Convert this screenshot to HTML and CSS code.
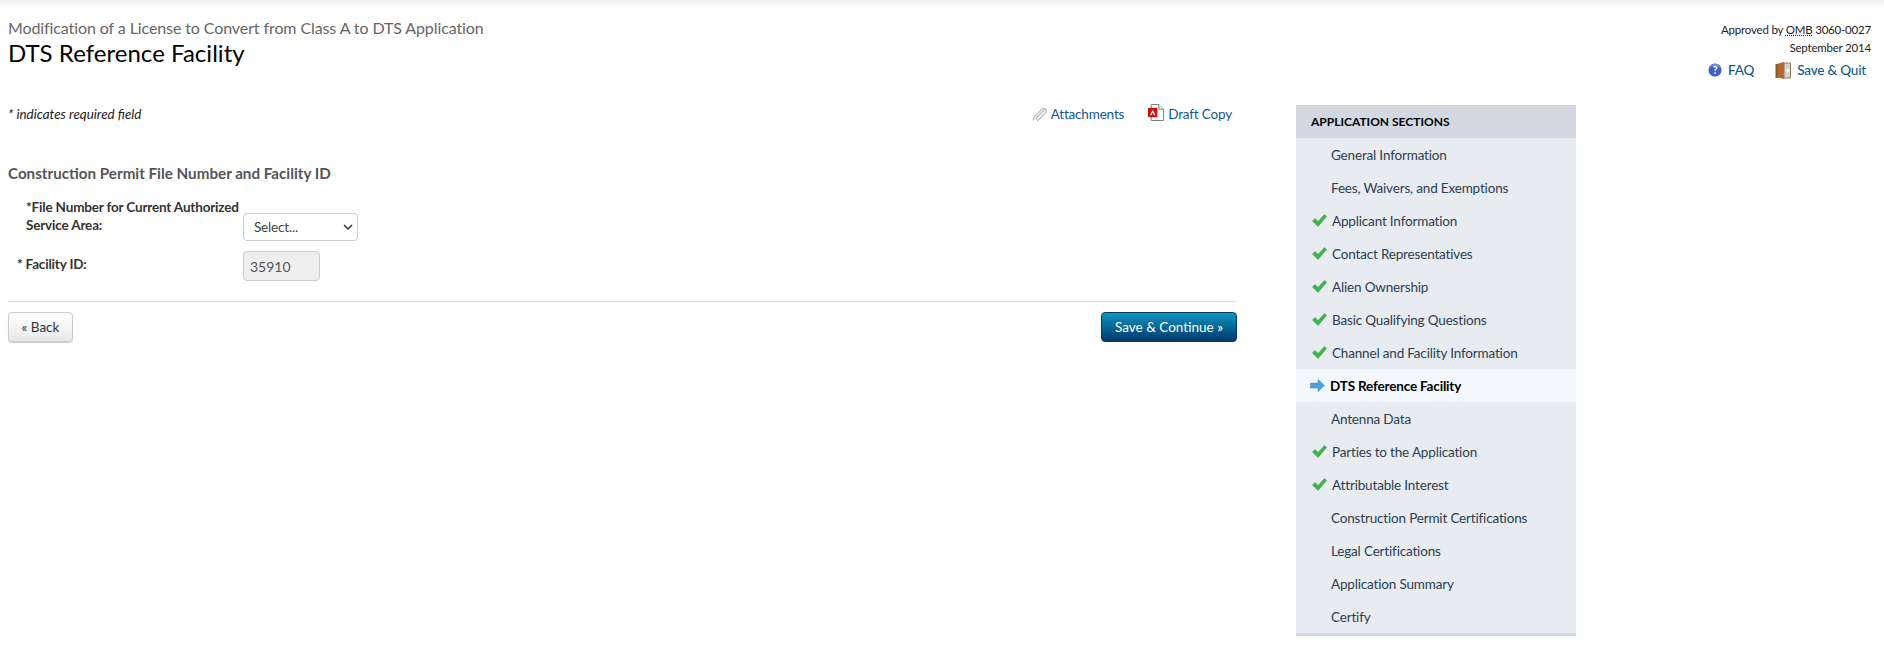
FILE: index.html
```html
<!DOCTYPE html>
<html lang="en">
<head>
  <meta charset="UTF-8" />
  <title>DTS Reference Facility</title>
  <link rel="stylesheet" href="styles.css">
</head>
<body>
  <div class="top-shade"></div>
  <header class="page-head">
    <div>
      <div class="app-name">Modification of a License to Convert from Class A to DTS Application</div>
      <h1>DTS Reference Facility</h1>
    </div>
    <div class="head-right">
      <div class="omb">Approved by <abbr title="Office of Management and Budget">OMB</abbr> 3060-0027</div>
      <div class="omb">September 2014</div>
      <div class="head-links">
        <a href="#" class="link">
          <svg class="icon" width="14" height="14" viewBox="0 0 16 16"><circle cx="8" cy="8" r="7.5" fill="#3f5fc4"/><path d="M1.5 7a6.5 6 0 0 1 13 0a6.5 3.5 0 0 0-13 0z" fill="#7f97e0"/><text x="8" y="12.500" text-anchor="middle" class="q-mark">?</text></svg>
          FAQ
        </a>
        <a href="#" class="link">
          <svg class="icon" width="16" height="17" viewBox="0 0 16 17"><rect x="0.5" y="2" width="3" height="14" fill="#8a5a2b"/><path d="M3 1.5L9 0v17l-6-1.5z" fill="#b5672a"/><path d="M9 1h6.5v15H9z" fill="#cfd3d6" stroke="#9b7a52"/><path d="M10 8h2V6l3 2.5-3 2.5V9h-2z" fill="#fff"/></svg>
          Save &amp; Quit
        </a>
      </div>
    </div>
  </header>

  <div class="layout">
    <main class="main">
      <div class="tools">
        <em class="req-note">* indicates required field</em>
        <div class="tool-links">
          <a href="#" class="link link-attach">
            <svg class="icon" width="15" height="16" viewBox="0 0 16 16" fill="none" stroke="#b4b4b4" stroke-width="1.2"><path d="M13.5 3.2L5 11.8c-.9.9-.6 1.9 0 2.4.7.6 1.6.5 2.3-.2l7-7.2c1.3-1.4 1.2-3 .1-4S11.6 1.900 10.400 3.100L2.900 10.700c-1.700 1.800-1.400 3.300-.9 4.200"/></svg>
            Attachments
          </a>
          <a href="#" class="link link-attach">
            <svg class="icon icon-pdf" width="16" height="17" viewBox="0 0 17 18"><path d="M3.500 .5h8l5 5v12h-13z" fill="#fff" stroke="#777"/><path d="M11.500 .5v5h5" fill="#eee" stroke="#777"/><rect x="0" y="4" width="10" height="10" fill="#cc0f0f"/><path d="M5 6l3 6H6.500L5 9l-1.500 3H2z" fill="#fff"/></svg>
            Draft Copy
          </a>
        </div>
      </div>

      <h2>Construction Permit File Number and Facility ID</h2>

      <div class="field field-file">
        <label class="field-label">*File Number for Current Authorized Service Area:</label>
        <div class="select-box">
          <span>Select...</span>
          <svg width="10" height="6" viewBox="0 0 10 6" fill="none" stroke="#333" stroke-width="1.500"><path d="M1 1l4 4 4-4"/></svg>
        </div>
      </div>
      <div class="field field-id">
        <label class="field-label"><span class="star">*</span>Facility ID:</label>
        <input class="readonly" type="text" value="35910" readonly />
      </div>

      <div class="actions">
        <button class="btn-back">« Back</button>
        <button class="btn-next">Save &amp; Continue »</button>
      </div>
    </main>

    <aside class="sections">
      <div class="sections-head">APPLICATION SECTIONS</div>
      <ul>
        <li>General Information</li>
        <li>Fees, Waivers, and Exemptions</li>
        <li class="done">Applicant Information</li>
        <li class="done">Contact Representatives</li>
        <li class="done">Alien Ownership</li>
        <li class="done">Basic Qualifying Questions</li>
        <li class="done">Channel and Facility Information</li>
        <li class="current">DTS Reference Facility</li>
        <li>Antenna Data</li>
        <li class="done">Parties to the Application</li>
        <li class="done">Attributable Interest</li>
        <li>Construction Permit Certifications</li>
        <li>Legal Certifications</li>
        <li>Application Summary</li>
        <li>Certify</li>
      </ul>
    </aside>
  </div>

  <script>
    // status icons for the section list
    const check = '<svg class="mark" width="15" height="13" viewBox="0 0 15 13"><path d="M0.500 7L3 4.500l3 3L12.500 0.500 14.500 2.500 6 12.500z" fill="#3db54a" stroke="#2c9a3c" stroke-width=".5"/></svg>';
    const arrow = '<svg class="mark" width="15" height="13" viewBox="0 0 15 13"><path d="M0.500 4h7.500V.5l6.500 6-6.500 6V9H.5z" fill="#4a9fdf" stroke="#3a86c4" stroke-width=".5"/></svg>';
    document.querySelectorAll('.sections li').forEach(function (li) {
      if (li.classList.contains('done')) li.insertAdjacentHTML('afterbegin', check);
      if (li.classList.contains('current')) li.insertAdjacentHTML('afterbegin', arrow);
    });
  </script>
</body>
</html>
```

FILE: styles.css
```css
html, body {
  margin: 0;
  height: 647px;
  overflow: hidden;
}
body {
  font-family: Lato, 'Open Sans', sans-serif;
  font-size: 13.5px;
  letter-spacing: -0.17px;
  color: #222;
  background: #fff;
}
.top-shade {
  height: 8px;
  background: linear-gradient(#efefef, #fff);
}
.page-head {
  display: flex;
  justify-content: space-between;
  padding: 10px 13px 0 8px;
  height: 87px;
  box-sizing: border-box;
}
.app-name {
  font-size: 16px;
  letter-spacing: -0.1px;
  line-height: 20px;
  color: #666;
}
h1 {
  margin: 0;
  font-size: 24px;
  letter-spacing: 0.03px;
  line-height: 30px;
  font-weight: 400;
  color: #000;
}
.head-right {
  padding-top: 3px;
  text-align: right;
  font-size: 11.5px;
  letter-spacing: -0.2px;
  line-height: 18px;
  color: #222;
}
abbr {
  text-decoration: underline dotted;
}
.head-links {
  display: flex;
  justify-content: flex-end;
  gap: 21px;
  margin-top: 4px;
  padding-right: 5px;
  font-size: 13.5px;
  letter-spacing: -0.17px;
  font-weight: 500;
}
.link {
  display: inline-flex;
  align-items: center;
  gap: 6px;
  color: #14578f;
  text-decoration: none;
}
.link-attach {
  gap: 4px;
}
.icon {
  flex: none;
}
.q-mark {
  font: bold 12px Lato, sans-serif;
  fill: #fff;
}
.layout {
  display: flex;
  align-items: flex-start;
}
.main {
  width: 1229px;
  margin-left: 8px;
}
.tools {
  display: flex;
  justify-content: space-between;
  align-items: center;
  height: 20px;
  padding-top: 9px;
  padding-right: 5px;
}
.req-note {
  font-size: 13.4px;
  letter-spacing: 0;
  color: #222;
}
.tool-links {
  display: flex;
  gap: 24px;
}
.icon-pdf {
  margin-top: -4px;
}
h2 {
  margin: 39px 0 0;
  font-size: 15.2px;
  letter-spacing: 0;
  line-height: 20px;
  font-weight: 700;
  color: #555;
}
.field {
  display: flex;
  align-items: flex-start;
}
.field-file {
  margin-top: 15px;
}
.field-label {
  display: block;
  width: 235px;
  padding-left: 18px;
  box-sizing: border-box;
  line-height: 18px;
  font-weight: 700;
  color: #333;
  flex: none;
}
.star {
  margin-left: -9px;
  margin-right: 3px;
}
.select-box {
  display: flex;
  align-items: center;
  justify-content: space-between;
  box-sizing: border-box;
  width: 115px;
  height: 28px;
  margin-top: 15px;
  padding: 0 4px 0 10px;
  border: 1px solid #ccc;
  border-radius: 4px;
  background: #fff;
  color: #444;
}
.field-id {
  margin-top: 10px;
}
.field-id .field-label {
  padding-top: 4px;
}
.readonly {
  box-sizing: border-box;
  width: 77px;
  height: 30px;
  padding: 0 6px;
  border: 1px solid #ccc;
  border-radius: 4px;
  background: #eee;
  color: #555;
  font: 14px Lato, sans-serif;
}
.actions {
  display: flex;
  justify-content: space-between;
  margin-top: 20px;
  padding-top: 10px;
  border-top: 1px solid #ddd;
}
.btn-back {
  width: 65px;
  height: 30px;
  border: 1px solid #ccc;
  border-radius: 4px;
  background: linear-gradient(#fff, #e8e8e8);
  box-shadow: 0 1px 1px rgba(0,0,0,0.2);
  color: #333;
  font: 13.5px Lato, sans-serif;
}
.btn-next {
  width: 136px;
  height: 30px;
  border: 1px solid #003a63;
  border-radius: 4px;
  background: linear-gradient(#0e94c0, #00386a);
  color: #fff;
  font: 13.5px Lato, sans-serif;
}
.sections {
  width: 280px;
  margin: 10px 0 0 59px;
  background: #e8ebf0;
  border-bottom: 3px solid #d2d9e2;
}
.sections-head {
  height: 33px;
  line-height: 33px;
  padding-left: 15px;
  background: #d2d9e2;
  color: #000;
  font-size: 12px;
  letter-spacing: 0;
  font-weight: 700;
}
.sections ul {
  margin: 0;
  padding: 0;
  list-style: none;
}
.sections li {
  position: relative;
  height: 33px;
  line-height: 35px;
  padding-left: 35px;
  color: #2c3e50;
}
.sections li.done {
  padding-left: 36px;
}
.mark {
  position: absolute;
  left: 16px;
  top: 10px;
}
.sections li.current {
  padding-left: 34px;
  background: #f4f7fb;
  color: #000;
  font-weight: 700;
}
.current .mark {
  left: 14px;
}
```
